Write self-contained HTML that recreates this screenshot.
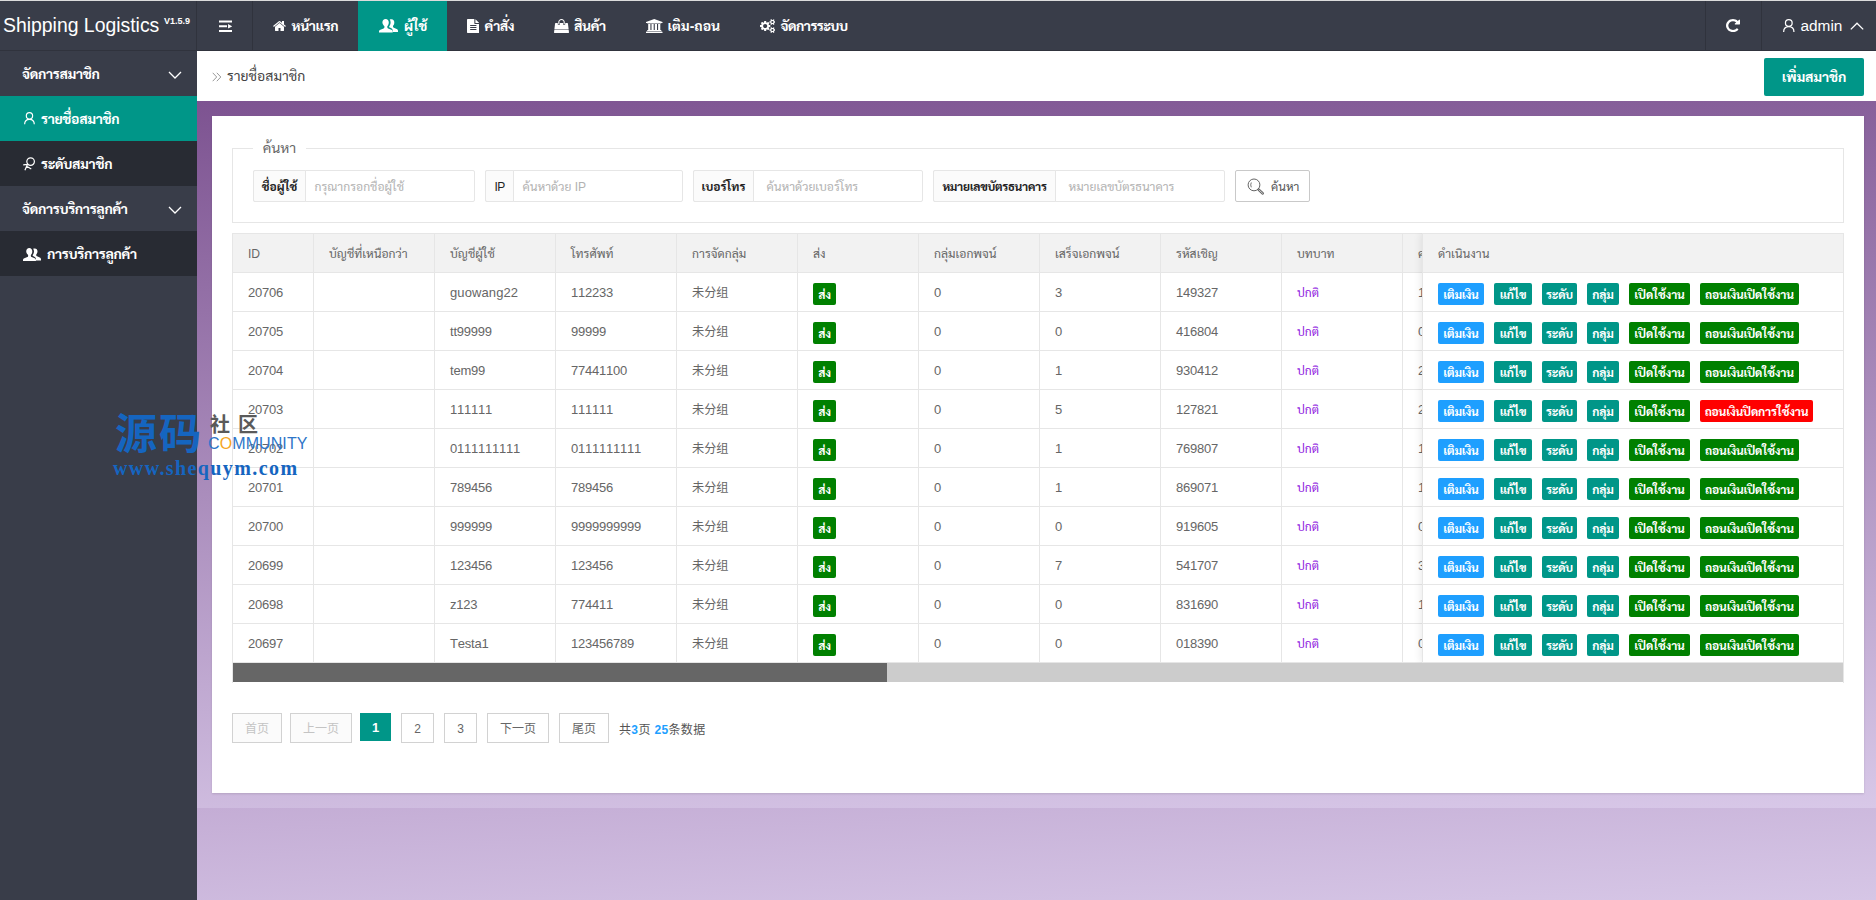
<!DOCTYPE html>
<html lang="th">
<head>
<meta charset="utf-8">
<title>Shipping Logistics</title>
<style>
*{box-sizing:border-box;margin:0;padding:0}
html,body{width:1876px;height:900px;overflow:hidden}
body{position:relative;background:#393D49;color:#666;font-family:"Liberation Sans","Sarabun","Noto Sans Thai Looped","Loma","Noto Sans CJK SC",sans-serif;font-size:14px;line-height:1}
.abs{position:absolute}
a{color:inherit;text-decoration:none}
i{font-style:normal}
#hdr{position:absolute;left:0;top:0;width:1876px;height:51px;background:#393D49;color:#fff;border-top:1px solid #dcdcdc;border-bottom:1px solid #30333d}
#hdr>*{margin-top:-1px}
#hdr .logo{position:absolute;left:0;top:0;height:50px;white-space:nowrap;color:#fff}
.l1{position:absolute;left:3px;top:0;line-height:50px;font-size:19.4px}
.l2{position:absolute;left:164px;top:15px;line-height:12px;font-size:9px;font-weight:bold}
.vline{position:absolute;top:1px;width:1px;height:49px;background:#30333d}
.nav{position:absolute;top:0;height:51px;line-height:51px;color:#fff;font-weight:bold;font-size:14px;white-space:nowrap}
.nav.on{background:linear-gradient(transparent 1px,#009688 1px)}
.nav span{position:absolute;top:1px;letter-spacing:-.4px}
.admin{position:absolute;left:1800.5px;top:0;height:51px;line-height:51px;font-size:15.4px;color:#fff}
#side{position:absolute;left:0;top:51px;width:197px;height:849px;background:#393D49}
.si{position:absolute;left:0;width:197px;height:45px;line-height:45px;color:#fff;font-weight:bold;font-size:14px;white-space:nowrap}
.si.sub{background:#282B33}
.si.on{background:#009688}
.si span{position:absolute;top:1px;letter-spacing:-.33px}
#bc{position:absolute;left:197px;top:51px;width:1679px;height:50px;background:#fff}
.bct{position:absolute;left:30px;top:0;line-height:50px;font-size:14px;color:#444;white-space:nowrap}
.addbtn{position:absolute;left:1567px;top:7px;width:100px;height:38px;line-height:38px;background:#009688;color:#fff;border-radius:2px;text-align:center;font-weight:bold;font-size:14px;white-space:nowrap;letter-spacing:-.15px}
#bg1{position:absolute;left:197px;top:101px;width:1679px;height:707px;background:linear-gradient(177deg,#7d5391 0%,#d8c8e8 100%)}
#bg2{position:absolute;left:197px;top:808px;width:1679px;height:92px;background:linear-gradient(177deg,#c4add5 0%,#d6c6e6 100%)}
#card{position:absolute;left:212px;top:116px;width:1652px;height:677px;background:#fff;box-shadow:0 1px 2px rgba(0,0,0,.12)}
.fs{position:absolute;left:20px;top:32px;width:1612px;height:75px;border:1px solid #e6e6e6}
.legend{position:absolute;left:41px;top:22px;width:53px;height:22px;line-height:21px;background:#fff;text-align:center;font-size:14.2px;color:#666;white-space:nowrap}
.ig{position:absolute;height:32px;border:1px solid #e6e6e6;border-radius:2px;background:#fff}
.ig label{position:absolute;left:-1px;top:-1px;height:32px;line-height:32.6px;border:1px solid #e6e6e6;border-radius:2px 0 0 2px;background:#FBFBFB;text-align:center;font-size:12px;font-weight:bold;color:#222;white-space:nowrap}
.ig .ph{position:absolute;top:0;line-height:32.6px;padding-left:8.5px;font-size:12.1px;color:#b2b2b2;white-space:nowrap}
.ig label.lat{font-weight:normal;letter-spacing:-.6px;line-height:32px}
.sbtn{position:absolute;width:75px;height:32px;border:1px solid #C9C9C9;border-radius:2px;background:#fff}
.sbtn span{position:absolute;left:35px;top:0;line-height:32.6px;font-size:12px;color:#555;white-space:nowrap}
.tbl{position:absolute;width:1612px;height:450px;overflow:hidden;font-size:13px}
.tr{position:absolute;left:0;width:1612px;height:39px;border-bottom:1px solid #e6e6e6;background:#fff}
.tr.th{background:#f2f2f2;border-top:1px solid #e6e6e6;height:40px}
.tbl{border-left:1px solid #e6e6e6;border-right:1px solid #e6e6e6}
.td{font-kerning:none;position:absolute;top:0;height:39px;border-left:1px solid #e6e6e6;line-height:39px;padding-left:15px;white-space:nowrap;overflow:hidden;color:#666;letter-spacing:-.22px;margin-left:-1px}
.th .td{font-size:12.15px;letter-spacing:0;color:#666;line-height:40px;height:40px;top:0}
.cj{font-size:12.2px;letter-spacing:0}
.tag{position:absolute;left:15px;top:10px;width:23px;height:22px;line-height:25px;background:#008000;color:#fff;border-radius:2px;font-size:12px;text-align:center;letter-spacing:-.2px}
.role{color:#9020E0;font-size:12px;letter-spacing:0}
.fix{position:absolute;top:0;width:421px;height:430px;background:#fff;box-shadow:-1px 0 8px rgba(0,0,0,.09);border-left:1px solid #e6e6e6}
.frow{position:absolute;left:0;width:421px;height:39px;border-bottom:1px solid #e6e6e6;background:#fff}
.frow.th{background:#f2f2f2;border-top:1px solid #e6e6e6;height:40px}
.ft{position:absolute;left:15px;top:0;line-height:40px;font-size:12.15px;color:#666;white-space:nowrap}
.bt{position:absolute;top:10px;height:22px;line-height:25px;letter-spacing:-.2px;border-radius:2px;color:#fff;font-size:12px;font-weight:bold;text-align:center;white-space:nowrap}
.b1{background:#1E9FFF}.b2{background:#009688}.b3{background:#008000}.b4{background:#FF0000}
.sbar{position:absolute;left:0;top:430px;width:1610px;height:19px;background:#ccc}
.sbar i{position:absolute;left:0;top:0;width:654px;height:19px;background:#666}
.pg{position:absolute;height:30px;width:600px;font-size:12px}
.pg a{position:absolute;top:0;height:30px;line-height:31.5px;border:1px solid #d2d2d2;text-align:center;color:#666;background:#fff;white-space:nowrap}
.pg a.dis{color:#c4c4c4;background:#fbfbfb}
.pg a.cur{background:#009688;color:#fff;border:0;height:28px;line-height:29.5px;font-weight:bold;font-size:13px}
.pg .tot{position:absolute;top:0;line-height:34px;color:#555;white-space:nowrap;letter-spacing:.35px}
.pg .tot b{color:#1E9FFF}
#wm{position:absolute;left:0;top:0;width:400px;height:500px;pointer-events:none}
#wm span{position:absolute;white-space:nowrap}
.w1{left:115px;top:410px;font-size:42px;font-weight:700;color:#1565C0;font-family:"Noto Sans CJK SC",sans-serif;letter-spacing:2px}
.w2{left:210px;top:414px;font-size:20px;font-weight:bold;color:#5a5a5a;font-family:"Noto Sans CJK SC",sans-serif;letter-spacing:8px}
.w3{left:208px;top:436px;font-size:16px;color:#2E75C8;letter-spacing:.1px}
.w3 i{color:#F5A623}
.w4{left:113px;top:457.5px;font-size:20px;font-weight:bold;color:#1565C0;font-family:"Liberation Serif",serif;letter-spacing:1.4px}

</style>
</head>
<body>
<div id="hdr">
<div class="logo"><span class="l1">Shipping Logistics</span><span class="l2">V1.5.9</span></div>
<i class="vline" style="left:196px"></i><i class="vline" style="left:252px"></i><i class="vline" style="left:1705px"></i><i class="vline" style="left:1761px"></i><svg class="abs" style="left:218.5px;top:19.5px" width="13.5" height="13" viewBox="0 0 14 13" preserveAspectRatio="none"><path fill="#fff" d="M0 .5h14v2H0zM0 5.300h8.300v2H0zM0 10h14v2H0zM9.400 4l4.300 2.300-4.300 2.300z"/></svg>
<div class="nav" style="left:253px;width:105px"><svg class="abs" style="left:19.8px;top:18.8px" width="13" height="14" viewBox="0 -1536 1664 1792" preserveAspectRatio="none"><path fill="#fff" transform="scale(1,-1)" d="M1408 544V64Q1408 38 1389.0 19.0Q1370 0 1344 0H960V384H704V0H320Q294 0 275.0 19.0Q256 38 256 64V544Q256 545 256.5 547.0Q257 549 257 550L832 1024L1407 550Q1408 548 1408 544ZM1631 613 1569 539Q1561 530 1548 528H1545Q1532 528 1524 535L832 1112L140 535Q128 527 116 528Q103 530 95 539L33 613Q25 623 26.0 636.5Q27 650 37 658L756 1257Q788 1283 832.0 1283.0Q876 1283 908 1257L1152 1053V1248Q1152 1262 1161.0 1271.0Q1170 1280 1184 1280H1376Q1390 1280 1399.0 1271.0Q1408 1262 1408 1248V840L1627 658Q1637 650 1638.0 636.5Q1639 623 1631 613Z"/></svg><span style="left:38.5px">หน้าแรก</span></div>
<div class="nav on" style="left:358px;width:89px"><svg class="abs" style="left:21px;top:19px" width="19" height="14" viewBox="0 0 19 14"><use href="#ic-users"/></svg><span style="left:46px">ผู้ใช้</span></div>
<div class="nav" style="left:447px;width:88px"><svg class="abs" style="left:19.7px;top:19px" width="12.6" height="14" viewBox="0 -1536 1536 1792" preserveAspectRatio="none"><path fill="#fff" transform="scale(1,-1)" d="M1468 1060Q1482 1046 1496 1024H1024V1496Q1046 1482 1060 1468ZM992 896H1536V-160Q1536 -200 1508.0 -228.0Q1480 -256 1440 -256H96Q56 -256 28.0 -228.0Q0 -200 0 -160V1440Q0 1480 28.0 1508.0Q56 1536 96 1536H896V992Q896 952 924.0 924.0Q952 896 992 896ZM1152 160V224Q1152 238 1143.0 247.0Q1134 256 1120 256H416Q402 256 393.0 247.0Q384 238 384 224V160Q384 146 393.0 137.0Q402 128 416 128H1120Q1134 128 1143.0 137.0Q1152 146 1152 160ZM1152 416V480Q1152 494 1143.0 503.0Q1134 512 1120 512H416Q402 512 393.0 503.0Q384 494 384 480V416Q384 402 393.0 393.0Q402 384 416 384H1120Q1134 384 1143.0 393.0Q1152 402 1152 416ZM1152 672V736Q1152 750 1143.0 759.0Q1134 768 1120 768H416Q402 768 393.0 759.0Q384 750 384 736V672Q384 658 393.0 649.0Q402 640 416 640H1120Q1134 640 1143.0 649.0Q1152 658 1152 672Z"/></svg><span style="left:37.4px">คำสั่ง</span></div>
<div class="nav" style="left:535px;width:91px"><svg class="abs" style="left:19.2px;top:19px" width="15" height="14" viewBox="0 -1536 1792 1792" preserveAspectRatio="none"><path fill="#fff" transform="scale(1,-1)" d="M1757 128 1792 -185Q1795 -213 1776 -235Q1757 -256 1728 -256H64Q35 -256 16 -235Q-3 -213 0 -185L35 128ZM1664 967 1750 192H42L128 967Q131 991 149.0 1007.5Q167 1024 192 1024H448V896Q448 843 485.5 805.5Q523 768 576.0 768.0Q629 768 666.5 805.5Q704 843 704 896V1024H1088V896Q1088 843 1125.5 805.5Q1163 768 1216.0 768.0Q1269 768 1306.5 805.5Q1344 843 1344 896V1024H1600Q1625 1024 1643.0 1007.5Q1661 991 1664 967ZM1280 1152V896Q1280 870 1261.0 851.0Q1242 832 1216.0 832.0Q1190 832 1171.0 851.0Q1152 870 1152 896V1152Q1152 1258 1077.0 1333.0Q1002 1408 896.0 1408.0Q790 1408 715.0 1333.0Q640 1258 640 1152V896Q640 870 621.0 851.0Q602 832 576.0 832.0Q550 832 531.0 851.0Q512 870 512 896V1152Q512 1311 624.5 1423.5Q737 1536 896.0 1536.0Q1055 1536 1167.5 1423.5Q1280 1311 1280 1152Z"/></svg><span style="left:39px">สินค้า</span></div>
<div class="nav" style="left:626px;width:114px"><svg class="abs" style="left:19.5px;top:18.9px" width="17.6" height="14" viewBox="0 -1536 2048 1792" preserveAspectRatio="none"><path fill="#fff" transform="scale(1,-1)" d="M960 1536 1920 1152V1024H1792Q1792 998 1771.5 979.0Q1751 960 1723 960H197Q169 960 148.5 979.0Q128 998 128 1024H0V1152ZM256 896H512V128H640V896H896V128H1024V896H1280V128H1408V896H1664V128H1723Q1751 128 1771.5 109.0Q1792 90 1792 64V0H128V64Q128 90 148.5 109.0Q169 128 197 128H256ZM1851 -64Q1879 -64 1899.5 -83.0Q1920 -102 1920 -128V-256H0V-128Q0 -102 20.5 -83.0Q41 -64 69 -64Z"/></svg><span style="left:41.5px;letter-spacing:0">เติม-ถอน</span></div>
<div class="nav" style="left:740px;width:127px"><svg class="abs" style="left:19.75px;top:19px" width="15.5" height="14" viewBox="0 -1536 1920 1792" preserveAspectRatio="none"><path fill="#fff" transform="scale(1,-1)" d="M821.0 459.0Q896 534 896.0 640.0Q896 746 821.0 821.0Q746 896 640.0 896.0Q534 896 459.0 821.0Q384 746 384.0 640.0Q384 534 459.0 459.0Q534 384 640.0 384.0Q746 384 821.0 459.0ZM1664 128Q1664 180 1626.0 218.0Q1588 256 1536.0 256.0Q1484 256 1446.0 218.0Q1408 180 1408 128Q1408 75 1445.5 37.5Q1483 0 1536.0 0.0Q1589 0 1626.5 37.5Q1664 75 1664 128ZM1664 1152Q1664 1204 1626.0 1242.0Q1588 1280 1536.0 1280.0Q1484 1280 1446.0 1242.0Q1408 1204 1408 1152Q1408 1099 1445.5 1061.5Q1483 1024 1536.0 1024.0Q1589 1024 1626.5 1061.5Q1664 1099 1664 1152ZM1280 731V546Q1280 536 1273.0 526.5Q1266 517 1257 516L1102 492Q1091 457 1070 416Q1104 368 1160 301Q1167 290 1167 281Q1167 269 1160 262Q1137 232 1077.5 172.5Q1018 113 999 113Q988 113 978 120L863 210Q826 191 786 179Q775 71 763 24Q756 0 733 0H547Q536 0 527.0 7.5Q518 15 517 25L494 178Q460 188 419 209L301 120Q294 113 281 113Q270 113 260 121Q116 254 116 281Q116 290 123 300Q133 314 164.0 353.0Q195 392 211 414Q188 458 176 496L24 520Q14 521 7.0 529.5Q0 538 0 549V734Q0 744 7.0 753.5Q14 763 23 764L178 788Q189 823 210 864Q176 912 120 979Q113 990 113 999Q113 1011 120 1019Q142 1049 202.0 1108.0Q262 1167 281 1167Q292 1167 302 1160L417 1070Q451 1088 494 1102Q505 1210 517 1256Q524 1280 547 1280H733Q744 1280 753.0 1272.5Q762 1265 763 1255L786 1102Q820 1092 861 1071L979 1160Q987 1167 999 1167Q1010 1167 1020 1159Q1164 1026 1164 999Q1164 991 1157 980Q1145 964 1115.0 926.0Q1085 888 1070 866Q1093 818 1104 784L1256 761Q1266 759 1273.0 750.5Q1280 742 1280 731ZM1920 198V58Q1920 42 1771 27Q1759 0 1741 -25Q1792 -138 1792 -163Q1792 -167 1788 -170Q1666 -241 1664 -241Q1656 -241 1618.0 -194.0Q1580 -147 1566 -126Q1546 -128 1536.0 -128.0Q1526 -128 1506 -126Q1492 -147 1454.0 -194.0Q1416 -241 1408 -241Q1406 -241 1284 -170Q1280 -167 1280 -163Q1280 -138 1331 -25Q1313 0 1301 27Q1152 42 1152 58V198Q1152 214 1301 229Q1314 258 1331 281Q1280 394 1280 419Q1280 423 1284 426Q1288 428 1319.0 446.0Q1350 464 1378.0 480.0Q1406 496 1408 496Q1416 496 1454.0 449.5Q1492 403 1506 382Q1526 384 1536.0 384.0Q1546 384 1566 382Q1617 453 1658 494L1664 496Q1668 496 1788 426Q1792 423 1792 419Q1792 394 1741 281Q1758 258 1771 229Q1920 214 1920 198ZM1920 1222V1082Q1920 1066 1771 1051Q1759 1024 1741 999Q1792 886 1792 861Q1792 857 1788 854Q1666 783 1664 783Q1656 783 1618.0 830.0Q1580 877 1566 898Q1546 896 1536.0 896.0Q1526 896 1506 898Q1492 877 1454.0 830.0Q1416 783 1408 783Q1406 783 1284 854Q1280 857 1280 861Q1280 886 1331 999Q1313 1024 1301 1051Q1152 1066 1152 1082V1222Q1152 1238 1301 1253Q1314 1282 1331 1305Q1280 1418 1280 1443Q1280 1447 1284 1450Q1288 1452 1319.0 1470.0Q1350 1488 1378.0 1504.0Q1406 1520 1408 1520Q1416 1520 1454.0 1473.5Q1492 1427 1506 1406Q1526 1408 1536.0 1408.0Q1546 1408 1566 1406Q1617 1477 1658 1518L1664 1520Q1668 1520 1788 1450Q1792 1447 1792 1443Q1792 1418 1741 1305Q1758 1282 1771 1253Q1920 1238 1920 1222Z"/></svg><span style="left:40.5px;letter-spacing:-.55px">จัดการระบบ</span></div>
<svg class="abs" style="left:1726px;top:17.9px" width="14" height="15.2" viewBox="0 -1536 1536 1792" preserveAspectRatio="none"><path fill="#fff" transform="scale(1,-1)" d="M1536 1280V832Q1536 806 1517.0 787.0Q1498 768 1472 768H1024Q982 768 965 808Q948 847 979 877L1117 1015Q969 1152 768 1152Q664 1152 569.5 1111.5Q475 1071 406.0 1002.0Q337 933 296.5 838.5Q256 744 256.0 640.0Q256 536 296.5 441.5Q337 347 406.0 278.0Q475 209 569.5 168.5Q664 128 768 128Q887 128 993.0 180.0Q1099 232 1172 327Q1179 337 1195 339Q1210 339 1220 330L1357 192Q1366 184 1366.5 171.5Q1367 159 1359 149Q1250 17 1095.0 -55.5Q940 -128 768 -128Q612 -128 470.0 -67.0Q328 -6 225.0 97.0Q122 200 61.0 342.0Q0 484 0.0 640.0Q0 796 61.0 938.0Q122 1080 225.0 1183.0Q328 1286 470.0 1347.0Q612 1408 768 1408Q915 1408 1052.5 1352.5Q1190 1297 1297 1196L1427 1325Q1456 1356 1497 1339Q1536 1322 1536 1280Z"/></svg><svg class="abs" style="left:1783px;top:19px" width="12" height="13.2" viewBox="0 0 12 13" preserveAspectRatio="none"><use href="#ic-user"/></svg><div class="admin">admin</div><svg class="abs" style="left:1850px;top:21.5px" width="14" height="8" viewBox="0 0 14 8"><path d="M.8 7.400L7 1.200l6.200 6.200" fill="none" stroke="#fff" stroke-width="1.3"/></svg>
</div>
<svg width="0" height="0" style="position:absolute"><defs>
<symbol id="ic-users" viewBox="0 0 19 14"><path fill="#fff" d="M12.6 0.3c1.6 0 2.7 1.3 2.7 3.1 0 1.3-.5 2.6-1.3 3.3v.9c0 .5.3.9.8 1.1l2.9 1.2c.8.3 1.3 1 1.3 1.800V13h-5.300v-1.500c0-1.100-.7-2.100-1.700-2.500L10.600 8.400c-.2-.1-.4-.3-.4-.5V7.300c.9-1 1.400-2.500 1.400-3.900 0-1.100-.300-2.100-.9-2.800C11.300.4 11.900.3 12.600.3z"/><path fill="#fff" d="M6.600 0c1.900 0 3.200 1.500 3.200 3.500 0 1.500-.6 2.900-1.500 3.700v1c0 .5.300 1 .8 1.200l3.200 1.300c.9.400 1.400 1.100 1.400 2V13.500H0V12.700c0-.9.500-1.600 1.400-2L4.600 9.400c.5-.2.800-.7.800-1.200v-1C4.500 6.400 3.400 5 3.400 3.500 3.400 1.500 4.700 0 6.600 0z"/></symbol>
<symbol id="ic-user" viewBox="0 0 12 13"><path fill="none" stroke="#fff" stroke-width="1.25" d="M5.800 .65c1.900 0 3.350 1.450 3.350 3.300S7.700 7.250 5.800 7.250 2.450 5.800 2.450 3.950 3.900.65 5.800.65zM.65 12.900c0-3.200 2-5.300 5.150-5.300s5.150 2.100 5.150 5.300"/></symbol>
<symbol id="ic-level" viewBox="0 0 12 14"><path fill="none" stroke="#fff" stroke-width="1.200" d="M7.600 .800c2.100 0 3.800 1.700 3.800 3.800S9.700 8.400 7.600 8.400 3.800 6.700 3.800 4.600 5.500.800 7.600.800zM4.800 7.400L.200 7.900M4.300 7.800L1.900 13.200M3.600 9.300L8.300 12.100"/></symbol>
<symbol id="ic-down" viewBox="0 0 14 8"><path d="M1 1l6 6 6-6" fill="none" stroke="#fff" stroke-width="1.3"/></symbol>
</defs></svg>
<div id="side">
<div class="si" style="top:0"><span style="left:22px">จัดการสมาชิก</span><svg class="abs" style="left:168px;top:19.5px" width="14" height="8"><use href="#ic-down"/></svg></div>
<div class="si on" style="top:45px"><svg class="abs" style="left:23.5px;top:16.3px" width="11.3" height="12.6" viewBox="0 0 12 13" preserveAspectRatio="none"><use href="#ic-user"/></svg><span style="left:41px">รายชื่อสมาชิก</span></div>
<div class="si sub" style="top:90px"><svg class="abs" style="left:23px;top:15.500px" width="12" height="14"><use href="#ic-level"/></svg><span style="left:41px">ระดับสมาชิก</span></div>
<div class="si" style="top:135px"><span style="left:22px">จัดการบริการลูกค้า</span><svg class="abs" style="left:168px;top:19.5px" width="14" height="8"><use href="#ic-down"/></svg></div>
<div class="si sub" style="top:180px"><svg class="abs" style="left:23px;top:16.5px" width="18" height="13.500"><use href="#ic-users"/></svg><span style="left:47px">การบริการลูกค้า</span></div>
</div>
<div id="bc"><svg class="abs" style="left:15px;top:20.5px" width="10" height="10" viewBox="0 0 10 10"><path d="M.7.8l4 4.200-4 4.200M4.800.8l4 4.200-4 4.200" fill="none" stroke="#999" stroke-width="1"/></svg><span class="bct">รายชื่อสมาชิก</span><a class="addbtn">เพิ่มสมาชิก</a></div>
<div id="bg1"></div><div id="bg2"></div>
<div id="card">
<div class="fs"></div><div class="legend">ค้นหา</div>
<div class="ig" style="left:41px;top:54px;width:222px"><label style="width:53px">ชื่อผู้ใช้</label><span class="ph" style="left:52px">กรุณากรอกชื่อผู้ใช้</span></div>
<div class="ig" style="left:273px;top:54px;width:198px"><label class="lat" style="width:29px">IP</label><span class="ph" style="left:28px">ค้นหาด้วย IP</span></div>
<div class="ig" style="left:481px;top:54px;width:230px"><label style="width:61px">เบอร์โทร</label><span class="ph" style="left:64px">ค้นหาด้วยเบอร์โทร</span></div>
<div class="ig" style="left:721px;top:54px;width:292px"><label style="width:123px;letter-spacing:-.3px">หมายเลขบัตรธนาคาร</label><span class="ph" style="left:126px">หมายเลขบัตรธนาคาร</span></div>
<div class="sbtn" style="left:1023px;top:54px"><svg class="abs" style="left:11px;top:6.5px" width="18" height="18" viewBox="0 0 18 18"><circle cx="7" cy="6.900" r="5.900" fill="none" stroke="#666" stroke-width="1"/><path d="M4.300 4.500Q3.100 6.900 4.300 9.300" fill="none" stroke="#666" stroke-width=".9"/><path d="M11.500 11.500l4.300 4" stroke="#666" stroke-width="2.400" stroke-linecap="round"/><path d="M11.900 11.900l3.700 3.400" stroke="#fff" stroke-width=".7" stroke-linecap="round"/></svg><span>ค้นหา</span></div>
<div class="tbl" style="left:20px;top:117px">
<div class="tr th" style="top:0"><div class="td" style="left:0px;width:81px"><span>ID</span></div><div class="td" style="left:81px;width:121px"><span>บัญชีที่เหนือกว่า</span></div><div class="td" style="left:202px;width:121px"><span>บัญชีผู้ใช้</span></div><div class="td" style="left:323px;width:121px"><span>โทรศัพท์</span></div><div class="td" style="left:444px;width:121px"><span>การจัดกลุ่ม</span></div><div class="td" style="left:565px;width:121px"><span>ส่ง</span></div><div class="td" style="left:686px;width:121px"><span>กลุ่มเอกพจน์</span></div><div class="td" style="left:807px;width:121px"><span>เสร็จเอกพจน์</span></div><div class="td" style="left:928px;width:121px"><span>รหัสเชิญ</span></div><div class="td" style="left:1049px;width:121px"><span>บทบาท</span></div><div class="td" style="left:1170px;width:121px"><span>ความสมดุล</span></div></div>
<div class="tr" style="top:40px"><div class="td" style="left:0px;width:81px"><span>20706</span></div><div class="td" style="left:81px;width:121px"><span></span></div><div class="td" style="left:202px;width:121px"><span style='letter-spacing:.1px'>guowang22</span></div><div class="td" style="left:323px;width:121px"><span>112233</span></div><div class="td" style="left:444px;width:121px"><span class="cj">未分组</span></div><div class="td" style="left:565px;width:121px"><b class="tag">ส่ง</b></div><div class="td" style="left:686px;width:121px"><span>0</span></div><div class="td" style="left:807px;width:121px"><span>3</span></div><div class="td" style="left:928px;width:121px"><span>149327</span></div><div class="td" style="left:1049px;width:121px"><span class="role">ปกติ</span></div><div class="td" style="left:1170px;width:121px"><span>1</span></div></div>
<div class="tr" style="top:79px"><div class="td" style="left:0px;width:81px"><span>20705</span></div><div class="td" style="left:81px;width:121px"><span></span></div><div class="td" style="left:202px;width:121px"><span>tt99999</span></div><div class="td" style="left:323px;width:121px"><span>99999</span></div><div class="td" style="left:444px;width:121px"><span class="cj">未分组</span></div><div class="td" style="left:565px;width:121px"><b class="tag">ส่ง</b></div><div class="td" style="left:686px;width:121px"><span>0</span></div><div class="td" style="left:807px;width:121px"><span>0</span></div><div class="td" style="left:928px;width:121px"><span>416804</span></div><div class="td" style="left:1049px;width:121px"><span class="role">ปกติ</span></div><div class="td" style="left:1170px;width:121px"><span>0</span></div></div>
<div class="tr" style="top:118px"><div class="td" style="left:0px;width:81px"><span>20704</span></div><div class="td" style="left:81px;width:121px"><span></span></div><div class="td" style="left:202px;width:121px"><span>tem99</span></div><div class="td" style="left:323px;width:121px"><span>77441100</span></div><div class="td" style="left:444px;width:121px"><span class="cj">未分组</span></div><div class="td" style="left:565px;width:121px"><b class="tag">ส่ง</b></div><div class="td" style="left:686px;width:121px"><span>0</span></div><div class="td" style="left:807px;width:121px"><span>1</span></div><div class="td" style="left:928px;width:121px"><span>930412</span></div><div class="td" style="left:1049px;width:121px"><span class="role">ปกติ</span></div><div class="td" style="left:1170px;width:121px"><span>2</span></div></div>
<div class="tr" style="top:157px"><div class="td" style="left:0px;width:81px"><span>20703</span></div><div class="td" style="left:81px;width:121px"><span></span></div><div class="td" style="left:202px;width:121px"><span>111111</span></div><div class="td" style="left:323px;width:121px"><span>111111</span></div><div class="td" style="left:444px;width:121px"><span class="cj">未分组</span></div><div class="td" style="left:565px;width:121px"><b class="tag">ส่ง</b></div><div class="td" style="left:686px;width:121px"><span>0</span></div><div class="td" style="left:807px;width:121px"><span>5</span></div><div class="td" style="left:928px;width:121px"><span>127821</span></div><div class="td" style="left:1049px;width:121px"><span class="role">ปกติ</span></div><div class="td" style="left:1170px;width:121px"><span>2</span></div></div>
<div class="tr" style="top:196px"><div class="td" style="left:0px;width:81px"><span>20702</span></div><div class="td" style="left:81px;width:121px"><span></span></div><div class="td" style="left:202px;width:121px"><span>0111111111</span></div><div class="td" style="left:323px;width:121px"><span>0111111111</span></div><div class="td" style="left:444px;width:121px"><span class="cj">未分组</span></div><div class="td" style="left:565px;width:121px"><b class="tag">ส่ง</b></div><div class="td" style="left:686px;width:121px"><span>0</span></div><div class="td" style="left:807px;width:121px"><span>1</span></div><div class="td" style="left:928px;width:121px"><span>769807</span></div><div class="td" style="left:1049px;width:121px"><span class="role">ปกติ</span></div><div class="td" style="left:1170px;width:121px"><span>1</span></div></div>
<div class="tr" style="top:235px"><div class="td" style="left:0px;width:81px"><span>20701</span></div><div class="td" style="left:81px;width:121px"><span></span></div><div class="td" style="left:202px;width:121px"><span>789456</span></div><div class="td" style="left:323px;width:121px"><span>789456</span></div><div class="td" style="left:444px;width:121px"><span class="cj">未分组</span></div><div class="td" style="left:565px;width:121px"><b class="tag">ส่ง</b></div><div class="td" style="left:686px;width:121px"><span>0</span></div><div class="td" style="left:807px;width:121px"><span>1</span></div><div class="td" style="left:928px;width:121px"><span>869071</span></div><div class="td" style="left:1049px;width:121px"><span class="role">ปกติ</span></div><div class="td" style="left:1170px;width:121px"><span>1</span></div></div>
<div class="tr" style="top:274px"><div class="td" style="left:0px;width:81px"><span>20700</span></div><div class="td" style="left:81px;width:121px"><span></span></div><div class="td" style="left:202px;width:121px"><span>999999</span></div><div class="td" style="left:323px;width:121px"><span>9999999999</span></div><div class="td" style="left:444px;width:121px"><span class="cj">未分组</span></div><div class="td" style="left:565px;width:121px"><b class="tag">ส่ง</b></div><div class="td" style="left:686px;width:121px"><span>0</span></div><div class="td" style="left:807px;width:121px"><span>0</span></div><div class="td" style="left:928px;width:121px"><span>919605</span></div><div class="td" style="left:1049px;width:121px"><span class="role">ปกติ</span></div><div class="td" style="left:1170px;width:121px"><span>0</span></div></div>
<div class="tr" style="top:313px"><div class="td" style="left:0px;width:81px"><span>20699</span></div><div class="td" style="left:81px;width:121px"><span></span></div><div class="td" style="left:202px;width:121px"><span>123456</span></div><div class="td" style="left:323px;width:121px"><span>123456</span></div><div class="td" style="left:444px;width:121px"><span class="cj">未分组</span></div><div class="td" style="left:565px;width:121px"><b class="tag">ส่ง</b></div><div class="td" style="left:686px;width:121px"><span>0</span></div><div class="td" style="left:807px;width:121px"><span>7</span></div><div class="td" style="left:928px;width:121px"><span>541707</span></div><div class="td" style="left:1049px;width:121px"><span class="role">ปกติ</span></div><div class="td" style="left:1170px;width:121px"><span>3</span></div></div>
<div class="tr" style="top:352px"><div class="td" style="left:0px;width:81px"><span>20698</span></div><div class="td" style="left:81px;width:121px"><span></span></div><div class="td" style="left:202px;width:121px"><span>z123</span></div><div class="td" style="left:323px;width:121px"><span>774411</span></div><div class="td" style="left:444px;width:121px"><span class="cj">未分组</span></div><div class="td" style="left:565px;width:121px"><b class="tag">ส่ง</b></div><div class="td" style="left:686px;width:121px"><span>0</span></div><div class="td" style="left:807px;width:121px"><span>0</span></div><div class="td" style="left:928px;width:121px"><span>831690</span></div><div class="td" style="left:1049px;width:121px"><span class="role">ปกติ</span></div><div class="td" style="left:1170px;width:121px"><span>1</span></div></div>
<div class="tr" style="top:391px"><div class="td" style="left:0px;width:81px"><span>20697</span></div><div class="td" style="left:81px;width:121px"><span></span></div><div class="td" style="left:202px;width:121px"><span>Testa1</span></div><div class="td" style="left:323px;width:121px"><span>123456789</span></div><div class="td" style="left:444px;width:121px"><span class="cj">未分组</span></div><div class="td" style="left:565px;width:121px"><b class="tag">ส่ง</b></div><div class="td" style="left:686px;width:121px"><span>0</span></div><div class="td" style="left:807px;width:121px"><span>0</span></div><div class="td" style="left:928px;width:121px"><span>018390</span></div><div class="td" style="left:1049px;width:121px"><span class="role">ปกติ</span></div><div class="td" style="left:1170px;width:121px"><span>0</span></div></div>
<div class="fix" style="left:1189px"><div class="frow th" style="top:0"><span class="ft">ดำเนินงาน</span></div><div class="frow" style="top:40px"><a class="bt b1" style="left:15px;width:46px">เติมเงิน</a><a class="bt b2" style="left:71px;width:38px">แก้ไข</a><a class="bt b2" style="left:119px;width:35px">ระดับ</a><a class="bt b2" style="left:164px;width:32px">กลุ่ม</a><a class="bt b3" style="left:206px;width:61px">เปิดใช้งาน</a><a class="bt b3" style="left:277px;width:99px">ถอนเงินเปิดใช้งาน</a></div><div class="frow" style="top:79px"><a class="bt b1" style="left:15px;width:46px">เติมเงิน</a><a class="bt b2" style="left:71px;width:38px">แก้ไข</a><a class="bt b2" style="left:119px;width:35px">ระดับ</a><a class="bt b2" style="left:164px;width:32px">กลุ่ม</a><a class="bt b3" style="left:206px;width:61px">เปิดใช้งาน</a><a class="bt b3" style="left:277px;width:99px">ถอนเงินเปิดใช้งาน</a></div><div class="frow" style="top:118px"><a class="bt b1" style="left:15px;width:46px">เติมเงิน</a><a class="bt b2" style="left:71px;width:38px">แก้ไข</a><a class="bt b2" style="left:119px;width:35px">ระดับ</a><a class="bt b2" style="left:164px;width:32px">กลุ่ม</a><a class="bt b3" style="left:206px;width:61px">เปิดใช้งาน</a><a class="bt b3" style="left:277px;width:99px">ถอนเงินเปิดใช้งาน</a></div><div class="frow" style="top:157px"><a class="bt b1" style="left:15px;width:46px">เติมเงิน</a><a class="bt b2" style="left:71px;width:38px">แก้ไข</a><a class="bt b2" style="left:119px;width:35px">ระดับ</a><a class="bt b2" style="left:164px;width:32px">กลุ่ม</a><a class="bt b3" style="left:206px;width:61px">เปิดใช้งาน</a><a class="bt b4" style="left:277px;width:113px">ถอนเงินปิดการใช้งาน</a></div><div class="frow" style="top:196px"><a class="bt b1" style="left:15px;width:46px">เติมเงิน</a><a class="bt b2" style="left:71px;width:38px">แก้ไข</a><a class="bt b2" style="left:119px;width:35px">ระดับ</a><a class="bt b2" style="left:164px;width:32px">กลุ่ม</a><a class="bt b3" style="left:206px;width:61px">เปิดใช้งาน</a><a class="bt b3" style="left:277px;width:99px">ถอนเงินเปิดใช้งาน</a></div><div class="frow" style="top:235px"><a class="bt b1" style="left:15px;width:46px">เติมเงิน</a><a class="bt b2" style="left:71px;width:38px">แก้ไข</a><a class="bt b2" style="left:119px;width:35px">ระดับ</a><a class="bt b2" style="left:164px;width:32px">กลุ่ม</a><a class="bt b3" style="left:206px;width:61px">เปิดใช้งาน</a><a class="bt b3" style="left:277px;width:99px">ถอนเงินเปิดใช้งาน</a></div><div class="frow" style="top:274px"><a class="bt b1" style="left:15px;width:46px">เติมเงิน</a><a class="bt b2" style="left:71px;width:38px">แก้ไข</a><a class="bt b2" style="left:119px;width:35px">ระดับ</a><a class="bt b2" style="left:164px;width:32px">กลุ่ม</a><a class="bt b3" style="left:206px;width:61px">เปิดใช้งาน</a><a class="bt b3" style="left:277px;width:99px">ถอนเงินเปิดใช้งาน</a></div><div class="frow" style="top:313px"><a class="bt b1" style="left:15px;width:46px">เติมเงิน</a><a class="bt b2" style="left:71px;width:38px">แก้ไข</a><a class="bt b2" style="left:119px;width:35px">ระดับ</a><a class="bt b2" style="left:164px;width:32px">กลุ่ม</a><a class="bt b3" style="left:206px;width:61px">เปิดใช้งาน</a><a class="bt b3" style="left:277px;width:99px">ถอนเงินเปิดใช้งาน</a></div><div class="frow" style="top:352px"><a class="bt b1" style="left:15px;width:46px">เติมเงิน</a><a class="bt b2" style="left:71px;width:38px">แก้ไข</a><a class="bt b2" style="left:119px;width:35px">ระดับ</a><a class="bt b2" style="left:164px;width:32px">กลุ่ม</a><a class="bt b3" style="left:206px;width:61px">เปิดใช้งาน</a><a class="bt b3" style="left:277px;width:99px">ถอนเงินเปิดใช้งาน</a></div><div class="frow" style="top:391px"><a class="bt b1" style="left:15px;width:46px">เติมเงิน</a><a class="bt b2" style="left:71px;width:38px">แก้ไข</a><a class="bt b2" style="left:119px;width:35px">ระดับ</a><a class="bt b2" style="left:164px;width:32px">กลุ่ม</a><a class="bt b3" style="left:206px;width:61px">เปิดใช้งาน</a><a class="bt b3" style="left:277px;width:99px">ถอนเงินเปิดใช้งาน</a></div></div>
<div class="sbar"><i></i></div>
</div>
<div class="pg" style="left:20px;top:597px"><a class="dis" style="left:0px;width:50px">首页</a><a class="dis" style="left:58px;width:62px">上一页</a><a class="cur" style="left:128px;width:31px">1</a><a class="" style="left:169px;width:33px">2</a><a class="" style="left:212px;width:33px">3</a><a class="" style="left:255px;width:62px">下一页</a><a class="" style="left:327px;width:50px">尾页</a><span class="tot" style="left:387px">共<b>3</b>页 <b>25</b>条数据</span></div>
</div>
<div id="wm"><span class="w1">源码</span><span class="w2">社区</span><span class="w3">C<i>O</i>MMUNITY</span><span class="w4">www.shequym.com</span></div>
</body>
</html>
